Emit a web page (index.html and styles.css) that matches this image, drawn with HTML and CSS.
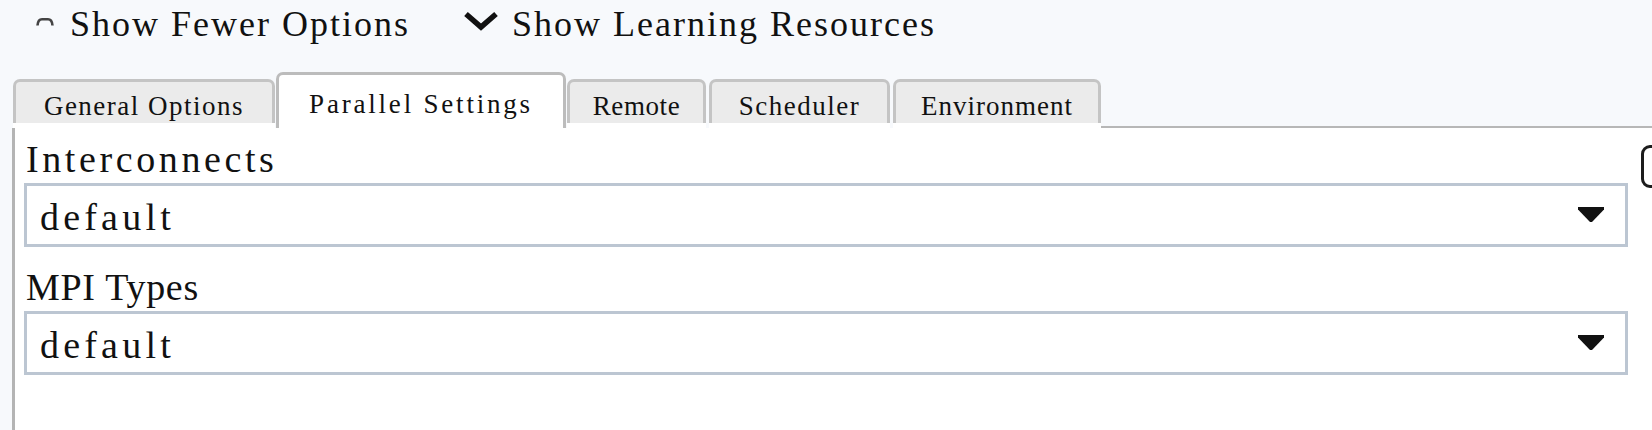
FILE: index.html
```html
<!DOCTYPE html>
<html>
<head>
<meta charset="utf-8">
<link rel="stylesheet" href="styles.css">
</head>
<body>
<div class="page">
  <div class="header">
    <span class="toggle">
      <svg class="ic-up" width="18" height="9" viewBox="0 0 18 9"><path d="M1.5 8.5 Q2 2.2 6 2.2 L12 2.2 Q16 2.2 16.5 8.5" fill="none" stroke="#444" stroke-width="2.6" stroke-linejoin="round"/></svg>
      <span class="toggle-text">Show Fewer Options</span>
    </span>
    <span class="toggle second">
      <svg class="ic-down" width="34" height="20" viewBox="0 0 34 20"><polyline points="2,3 17,16 32,3" fill="none" stroke="#111" stroke-width="5.5"/></svg>
      <span class="toggle-text">Show Learning Resources</span>
    </span>
  </div>
  <div class="tabbar">
    <div class="tab tab-general tight">General Options</div>
    <div class="tab tab-parallel active tight">Parallel Settings</div>
    <div class="tab tab-remote">Remote</div>
    <div class="tab tab-scheduler">Scheduler</div>
    <div class="tab tab-env last">Environment</div>
    <div class="tab-fill"></div>
  </div>
  <div class="panel">
    <div class="edge-btn"></div>
    <div class="field">
      <label class="label label-wide">Interconnects</label>
      <div class="select">
        <span class="value">default</span>
        <svg class="arrow" width="28" height="16" viewBox="0 0 28 16"><polygon points="1,0 27,0 27,2.5 15,15 13,15 1,2.5" fill="#111"/></svg>
      </div>
    </div>
    <div class="field second-field">
      <label class="label label-narrow">MPI Types</label>
      <div class="select">
        <span class="value">default</span>
        <svg class="arrow" width="28" height="16" viewBox="0 0 28 16"><polygon points="1,0 27,0 27,2.5 15,15 13,15 1,2.5" fill="#111"/></svg>
      </div>
    </div>
  </div>
</div>
</body>
</html>
```
FILE: styles.css
```css
html, body {
  margin: 0;
  padding: 0;
  overflow: hidden;
  background: #f7f9fc;
  font-family: "Liberation Serif", serif;
  color: #111;
}

.page {
  width: 1652px;
  height: 430px;
  display: flex;
  flex-direction: column;
}

.header {
  height: 53px;
  padding-left: 36px;
  display: flex;
  align-items: center;
  box-sizing: border-box;
}

.toggle {
  display: flex;
  align-items: center;
  height: 53px;
}

.toggle.second {
  margin-left: 54px;
}

.toggle-text {
  font-size: 36px;
  line-height: 46px;
  letter-spacing: 2px;
  margin-bottom: 6px;
  white-space: pre;
}

.ic-up {
  margin-right: 16px;
  margin-bottom: 10px;
}

.ic-down {
  margin-right: 14px;
  margin-bottom: 11px;
}

.tabbar {
  height: 75px;
  display: flex;
  align-items: flex-end;
  padding-left: 13px;
}

.tab {
  box-sizing: border-box;
  font-size: 27px;
  letter-spacing: 1.5px;
  line-height: 28px;
  text-align: center;
  padding: 10px 0 3px 0;
  border: 3px solid #c4c4c4;
  border-bottom: none;
  border-radius: 7px 7px 0 0;
  background: #ebebeb;
  margin-right: 3px;
  margin-bottom: 5px;
  box-shadow: 0 5px 0 #fff;
  white-space: pre;
}

.tab-general { width: 262px; }
.tab-parallel { width: 290px; letter-spacing: 2.8px; }
.tab-remote { width: 139px; letter-spacing: 0.6px; }
.tab-scheduler { width: 181px; }
.tab-env { width: 208px; letter-spacing: 1px; }

.tab.tight {
  margin-right: 1px;
}

.tab.last {
  margin-right: 0;
}

.tab.active {
  background: #fff;
  border-color: #bcbcbc;
  padding-top: 15px;
  padding-bottom: 10px;
  margin-bottom: 0;
  box-shadow: none;
}

.tab-fill {
  flex: 1;
  align-self: stretch;
  border-bottom: 2px solid #b7b7b7;
}

.panel {
  position: relative;
  flex: 1;
  margin-left: 12px;
  border-left: 3px solid #b4b4b4;
  background: #fff;
  padding: 11px 24px 0 9px;
}

.edge-btn {
  position: absolute;
  top: 17px;
  right: -19px;
  width: 30px;
  height: 43px;
  box-sizing: border-box;
  border: 3px solid #1c1c1c;
  border-radius: 9px;
}

.label {
  display: block;
  font-size: 38px;
  line-height: 40px;
  padding-left: 2px;
  margin-bottom: 4px;
}

.label-wide {
  letter-spacing: 3.6px;
}

.label-narrow {
  letter-spacing: 0.7px;
}

.select {
  height: 64px;
  box-sizing: border-box;
  border: 3px solid #bcc6d2;
  background: #fff;
  display: flex;
  align-items: center;
}

.value {
  font-size: 38px;
  line-height: 54px;
  letter-spacing: 4.2px;
  padding-top: 4px;
  padding-left: 13px;
}

.arrow {
  margin-left: auto;
  margin-right: 20px;
}

.second-field {
  margin-top: 20px;
}
```
